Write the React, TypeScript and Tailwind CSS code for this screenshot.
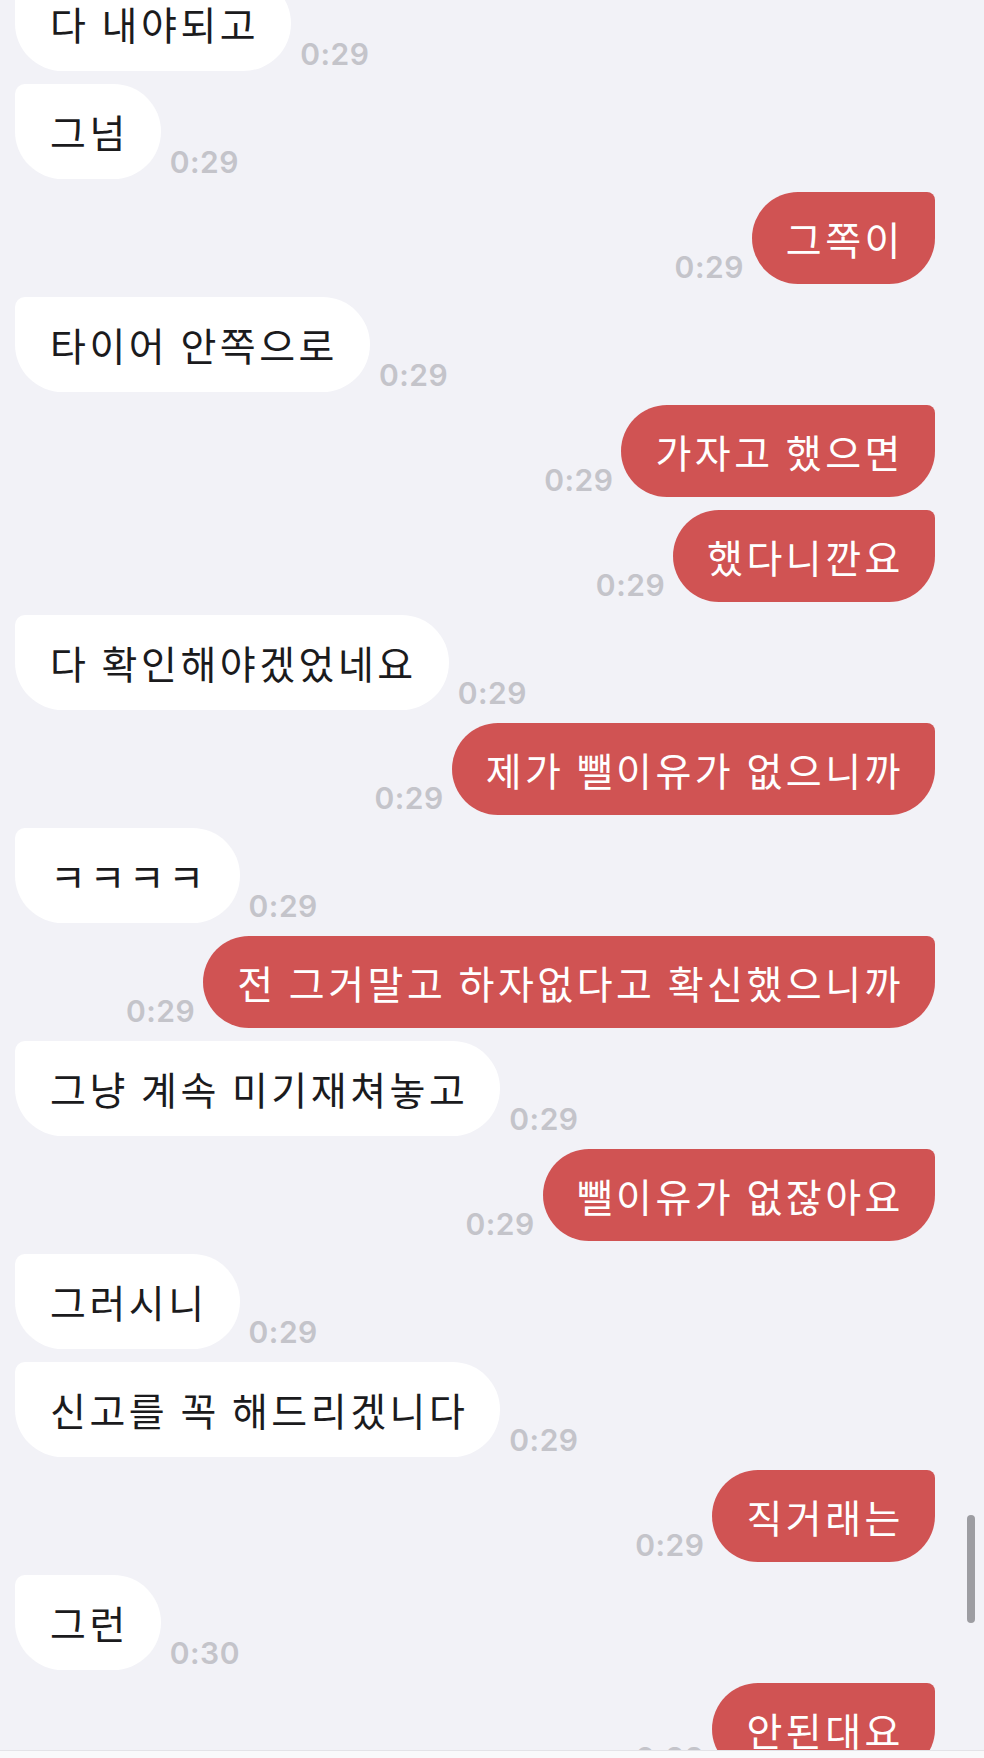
type Msg = { text: string; time: string; me: boolean };

const messages: Msg[] = [
  { text: '다 내야되고', time: '0:29', me: false },
  { text: '그넘', time: '0:29', me: false },
  { text: '그쪽이', time: '0:29', me: true },
  { text: '타이어 안쪽으로', time: '0:29', me: false },
  { text: '가자고 했으면', time: '0:29', me: true },
  { text: '했다니깐요', time: '0:29', me: true },
  { text: '다 확인해야겠었네요', time: '0:29', me: false },
  { text: '제가 뺄이유가 없으니까', time: '0:29', me: true },
  { text: 'ㅋㅋㅋㅋ', time: '0:29', me: false },
  { text: '전 그거말고 하자없다고 확신했으니까', time: '0:29', me: true },
  { text: '그냥 계속 미기재쳐놓고', time: '0:29', me: false },
  { text: '뺄이유가 없잖아요', time: '0:29', me: true },
  { text: '그러시니', time: '0:29', me: false },
  { text: '신고를 꼭 해드리겠니다', time: '0:29', me: false },
  { text: '직거래는', time: '0:29', me: true },
  { text: '그런', time: '0:30', me: false },
  { text: '안된대요', time: '0:29', me: true },
];

const Time = ({ value }: { value: string }) => (
  <span className="mb-[2px] font-['Inter',sans-serif] text-[30px] leading-none font-semibold tracking-[0.5px] text-[#c4c4ca]">
    {value}
  </span>
);

const Row = ({ msg }: { msg: Msg }) => {
  if (msg.me) {
    return (
      <div className="flex items-end justify-end gap-[8px]">
        <Time value={msg.time} />
        <div className="flex h-[92px] items-center whitespace-nowrap rounded-[46px] rounded-tr-[8px] bg-[#d05353] pr-[31px] pl-[34px] text-[39px] tracking-[3.5px] text-white">
          {msg.text}
        </div>
      </div>
    );
  }

  return (
    <div className="flex items-end gap-[9px]">
      <div className="flex h-[95px] items-center whitespace-nowrap rounded-[48px] rounded-tl-[10px] bg-white pr-[32px] pl-[35px] text-[39px] tracking-[3.5px] text-[#1b1b1d]">
        {msg.text}
      </div>
      <Time value={msg.time} />
    </div>
  );
};

const App = () => {
  return (
    <div className="relative h-[1758px] w-[984px] overflow-hidden bg-[#f2f2f7] font-['Noto_Sans_CJK_KR','Noto_Sans',sans-serif]">
      <div className="-mt-[24px] flex flex-col gap-[13px] pr-[49px] pl-[15px]">
        {messages.map((m, i) => (
          <Row key={i} msg={m} />
        ))}
      </div>

      {/* scroll indicator */}
      <div className="absolute top-[1515px] left-[967px] h-[108px] w-[8px] rounded-full bg-[#9d9da2]" />

      {/* bottom edge */}
      <div className="absolute bottom-0 left-0 h-[8px] w-full border-t border-[#e3e3e7] bg-[#f9f9fa]" />
    </div>
  );
};

export default App;
